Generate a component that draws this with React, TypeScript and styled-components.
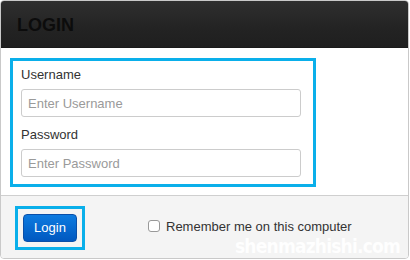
import styled, { createGlobalStyle } from "styled-components";

const GlobalStyle = createGlobalStyle`
    html, body {
        margin: 0;
        padding: 0;
        background: #ffffff;
    }
    body {
        font-family: "Liberation Sans", Arial, sans-serif;
    }
`;

export default function App() {
    return (
        <>
            <GlobalStyle />
            <Panel>
                <Header>
                    <Title>LOGIN</Title>
                </Header>
                <Body>
                    <Highlight>
                        <Field>
                            <Label htmlFor="username">Username</Label>
                            <Input id="username" placeholder="Enter Username" />
                        </Field>
                        <Field $gap={9}>
                            <Label htmlFor="password">Password</Label>
                            <Input id="password" type="password" placeholder="Enter Password" />
                        </Field>
                    </Highlight>
                </Body>
                <Footer>
                    <ButtonFrame>
                        <LoginButton>Login</LoginButton>
                    </ButtonFrame>
                    <Remember>
                        <Checkbox type="checkbox" />
                        Remember me on this computer
                    </Remember>
                    <Watermark>shenmazhishi.com</Watermark>
                </Footer>
            </Panel>
        </>
    );
}

const Panel = styled.div`
    position: relative;
    width: 409px;
    height: 259px;
    box-sizing: border-box;
    border: 1px solid #c9c9c9;
    border-radius: 4px;
    overflow: hidden;
    display: flex;
    flex-direction: column;
    background: #ffffff;
`;

const Header = styled.div`
    height: 47px;
    flex: none;
    display: flex;
    align-items: center;
    padding-left: 16px;
    background: linear-gradient(#2f2f2f, #232323 60%, #1f1f1f);
    border-bottom: 1px solid #1a1a1a;
    box-sizing: border-box;
`;

const Title = styled.h1`
    margin: 0;
    font-size: 18px;
    font-weight: bold;
    color: #0c0c0c;
    letter-spacing: 0;
    padding-top: 2px;
`;

const Body = styled.div`
    flex: none;
    padding: 10px 0 8px 9px;
    background: #ffffff;
`;

const Highlight = styled.div`
    width: 306px;
    height: 129px;
    box-sizing: border-box;
    border: 3px solid #0aafea;
    padding: 5px 0 0 8px;
`;

const Field = styled.div<{ $gap?: number }>`
    display: flex;
    flex-direction: column;
    margin-top: ${(p) => p.$gap ?? 0}px;
`;

const Label = styled.label`
    font-size: 13px;
    line-height: 17px;
    color: #333333;
    margin-bottom: 6px;
`;

const Input = styled.input`
    width: 280px;
    height: 28px;
    box-sizing: border-box;
    border: 1px solid #cccccc;
    border-radius: 3px;
    padding: 0 6px;
    font-family: "Liberation Sans", Arial, sans-serif;
    font-size: 13px;
    color: #555555;
    background: #ffffff;
    outline: none;

    &::placeholder {
        color: #9a9a9a;
    }
`;

const Footer = styled.div`
    position: relative;
    flex: 1;
    display: flex;
    align-items: center;
    padding-left: 14px;
    background: #f4f4f4;
    border-top: 1px solid #cfcfcf;
`;

const ButtonFrame = styled.div`
    border: 3px solid #0aafea;
    padding: 5px 5px;
    margin-top: 1px;
`;

const LoginButton = styled.button`
    display: block;
    width: 54px;
    height: 28px;
    border: 1px solid #0a4fa8;
    border-radius: 4px;
    background: linear-gradient(#0d7be0, #0058c0);
    color: #ffffff;
    font-family: "Liberation Sans", Arial, sans-serif;
    font-size: 13px;
    padding: 0;
`;

const Remember = styled.label`
    display: flex;
    align-items: center;
    margin-left: 63px;
    font-size: 13px;
    color: #333333;
    margin-top: -2px;
`;

const Checkbox = styled.input`
    appearance: none;
    width: 12px;
    height: 12px;
    margin: 0 6px 0 0;
    border: 1px solid #999999;
    border-radius: 3px;
    background: #ffffff;
`;

const Watermark = styled.span`
    position: absolute;
    right: 8px;
    bottom: 1px;
    font-family: "DejaVu Sans Condensed", "Liberation Sans Narrow", sans-serif;
    font-weight: bold;
    font-size: 19px;
    line-height: 22px;
    letter-spacing: -0.8px;
    color: #ffffff;
    opacity: 0.9;
`;
